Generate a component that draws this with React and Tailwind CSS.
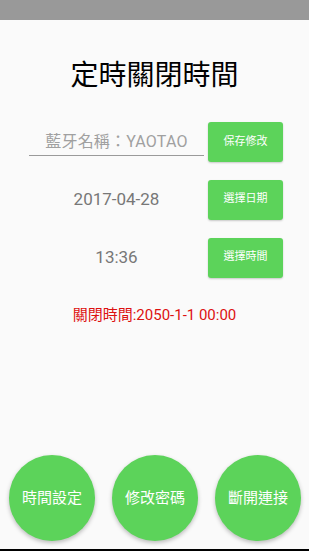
import React from "react";

const font = { fontFamily: "Roboto, 'Noto Sans CJK TC', sans-serif" };

const SmallButton = ({ label }) => (
  <button className="w-[75px] h-[40px] rounded-[3px] bg-[#5cd35a] text-white text-[11px] shadow-[0_1px_2px_rgba(0,0,0,0.2)] shrink-0">
    {label}
  </button>
);

const CircleButton = ({ label }) => (
  <button className="w-[86px] h-[86px] rounded-full bg-[#5cd35a] text-white text-[15px] shadow-[0_2px_4px_rgba(0,0,0,0.25)]">
    {label}
  </button>
);

const App = () => {
  return (
    <div style={font} className="w-[309px] h-[551px] bg-[#fafafa] flex flex-col overflow-hidden">
      {/* status bar */}
      <div className="h-[20px] bg-[#999999]" />

      <div className="flex-1 flex flex-col">
        <h1 className="mt-[42px] text-center text-[28px] leading-[28px] text-black">
          定時關閉時間
        </h1>

        {/* name row */}
        <div className="mt-[32px] flex items-center pl-[29px] pr-[26px] gap-[4px] h-[40px]">
          <div className="flex-1 h-[27px] border-b border-[#9a9a9a] text-center text-[16px] leading-[26px] text-[#a0a0a0] tracking-[0.2px]">
            藍牙名稱：YAOTAO
          </div>
          <SmallButton label="保存修改" />
        </div>

        {/* date row */}
        <div className="mt-[17px] flex items-center pl-[29px] pr-[26px] gap-[4px] h-[41px]">
          <div className="flex-1 text-center text-[17px] text-[#777777]">2017-04-28</div>
          <SmallButton label="選擇日期" />
        </div>

        {/* time row */}
        <div className="mt-[17px] flex items-center pl-[29px] pr-[26px] gap-[4px] h-[41px]">
          <div className="flex-1 text-center text-[17px] text-[#777777]">13:36</div>
          <SmallButton label="選擇時間" />
        </div>

        <p className="mt-[27px] text-center text-[15px] leading-[20px] text-[#dd1111]">
          關閉時間:2050-1-1 00:00
        </p>

        {/* bottom actions */}
        <div className="mt-auto mb-[8px] flex pl-[9px] gap-[17px]">
          <CircleButton label="時間設定" />
          <CircleButton label="修改密碼" />
          <CircleButton label="斷開連接" />
        </div>
      </div>

      <div className="h-[2px] bg-black" />
    </div>
  );
};

export default App;
